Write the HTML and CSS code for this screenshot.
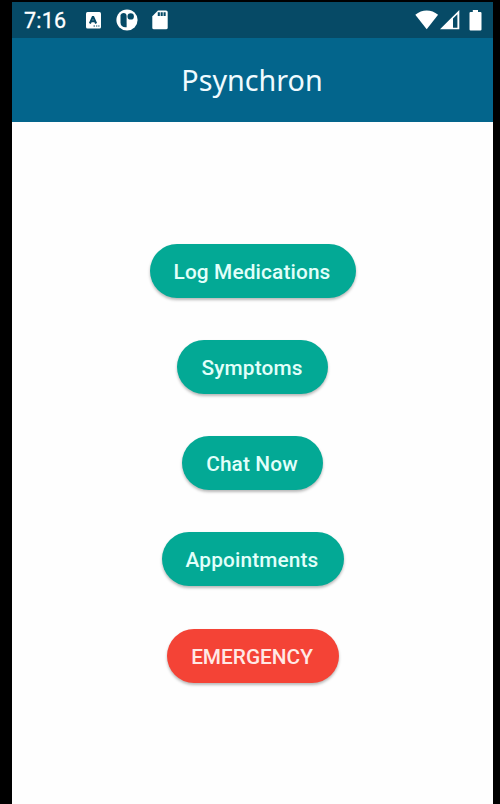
FILE: index.html
```html
<!DOCTYPE html>
<html lang="en">
<head>
    <meta charset="UTF-8">
    <meta name="viewport" content="width=device-width, initial-scale=1.0">
    <title>Psynchron</title>
    <link rel="stylesheet" href="styles.css">
</head>
<body>
    <div class="phone">
        <div class="status-bar">
            <span class="time">7:16</span>
            <svg class="icon-keyboard" width="15" height="17" viewBox="0 0 15 17">
                <rect width="15" height="16.5" rx="1.5" fill="#fff"/>
                <path d="M3.9 11.5L7 4.3L10.1 11.5M5.2 9.3H8.8" fill="none" stroke="#064a66" stroke-width="2.1" stroke-linejoin="bevel"/>
                <path d="M7.5 14H9M10 14H11.3M12.2 14H13.5" stroke="#064a66" stroke-width="1.2"/>
            </svg>
            <svg class="icon-app" width="22" height="22" viewBox="0 0 22 22">
                <circle cx="11" cy="11" r="10.6" fill="#fff"/>
                <path d="M4.5 6Q5.5 4 7.5 4Q10.6 4 10.6 7V18.3Q7.5 18.6 5.8 17Q4.5 15.5 4.5 13.5Z" fill="#064a66"/>
                <circle cx="14.7" cy="7.4" r="3.2" fill="#064a66"/>
            </svg>
            <svg class="icon-card" width="16" height="20" viewBox="0 0 16 20">
                <path d="M6 .5H14Q15.7.5 15.7 2V17.8Q15.7 19.3 14 19.3H2Q.3 19.3.3 17.8V6.2Z" fill="#fff"/>
                <path d="M6.8 2.3V6M9.7 2.3V6M12.6 2.3V6" stroke="#064a66" stroke-width="2.1"/>
            </svg>
            <div class="status-right">
                <svg width="24" height="20" viewBox="0 0 24 20">
                    <path d="M.3 4.8Q5.5.5 11.7.5T23.1 4.8L11.7 19.3Z" fill="#fff"/>
                </svg>
                <svg class="icon-signal" width="20" height="20" viewBox="0 0 20 20">
                    <path d="M0 19.3L19.3 0V19.3Z" fill="#fff"/>
                    <path d="M13 8.6L17.4 4.2V17.8H13Z" fill="#064a66"/>
                </svg>
                <svg class="icon-battery" width="13" height="21" viewBox="0 0 13 21">
                    <path d="M3.8 0H9V2H11.4Q12.5 2 12.5 3V19.4Q12.5 20.4 11.4 20.4H1.6Q.5 20.4.5 19.4V3Q.5 2 1.6 2H3.8Z" fill="#fff"/>
                </svg>
            </div>
        </div>
        <div class="header">
            <h1>Psynchron</h1>
        </div>
        <div class="menu">
            <button class="btn btn-log">Log Medications</button>
            <button class="btn btn-symptoms">Symptoms</button>
            <button class="btn btn-chat">Chat Now</button>
            <button class="btn btn-appointments">Appointments</button>
            <button class="btn btn-emergency">EMERGENCY</button>
        </div>
    </div>
</body>
</html>
```

FILE: styles.css
```css
* {
    box-sizing: border-box;
}

body {
    margin: 0;
    padding: 2px 7px 0 12px;
    background-color: #000;
    font-family: Roboto, sans-serif;
}

.phone {
    height: 802px;
    background-color: #fefefe;
}

.status-bar {
    display: flex;
    align-items: center;
    height: 36px;
    padding: 0 11px 0 12px;
    background-color: #064a66;
    color: #fff;
}

.time {
    width: 62px;
    font-size: 21.5px;
    line-height: 36px;
    letter-spacing: 0.2px;
    padding-top: 1px;
    -webkit-text-stroke: 0.3px #fff;
}

.icon-app {
    margin-left: 14.5px;
}

.icon-card {
    margin-left: 14px;
}

.status-right {
    display: flex;
    align-items: center;
    margin-left: auto;
}

.icon-signal {
    margin-left: 1px;
}

.icon-battery {
    margin-left: 9.5px;
}

.header {
    display: flex;
    justify-content: center;
    height: 84px;
    padding-right: 1px;
    background-color: #03658c;
}

h1 {
    margin: 0;
    font-family: "Noto Sans", sans-serif;
    font-size: 28.7px;
    font-weight: 400;
    line-height: 84px;
    color: #f0fbff;
}

.menu {
    display: flex;
    flex-direction: column;
    align-items: center;
    gap: 42.3px;
    padding: 121.6px 0 0;
}

.btn {
    height: 54px;
    padding: 2px 1px 0 0;
    border: none;
    border-radius: 27px;
    background-color: #03a995;
    color: #e2fffa;
    font-family: Roboto, sans-serif;
    font-size: 20.8px;
    font-weight: 500;
    letter-spacing: 0.15px;
    box-shadow: 0 2px 3px rgba(0, 0, 0, 0.28);
    cursor: pointer;
}

.btn-log {
    width: 206px;
}

.btn-symptoms {
    width: 151px;
}

.btn-chat {
    width: 141px;
}

.btn-appointments {
    width: 182px;
}

.btn-emergency {
    width: 172px;
    background-color: #f44336;
    color: #ffe9e5;
    letter-spacing: 0;
}
```
